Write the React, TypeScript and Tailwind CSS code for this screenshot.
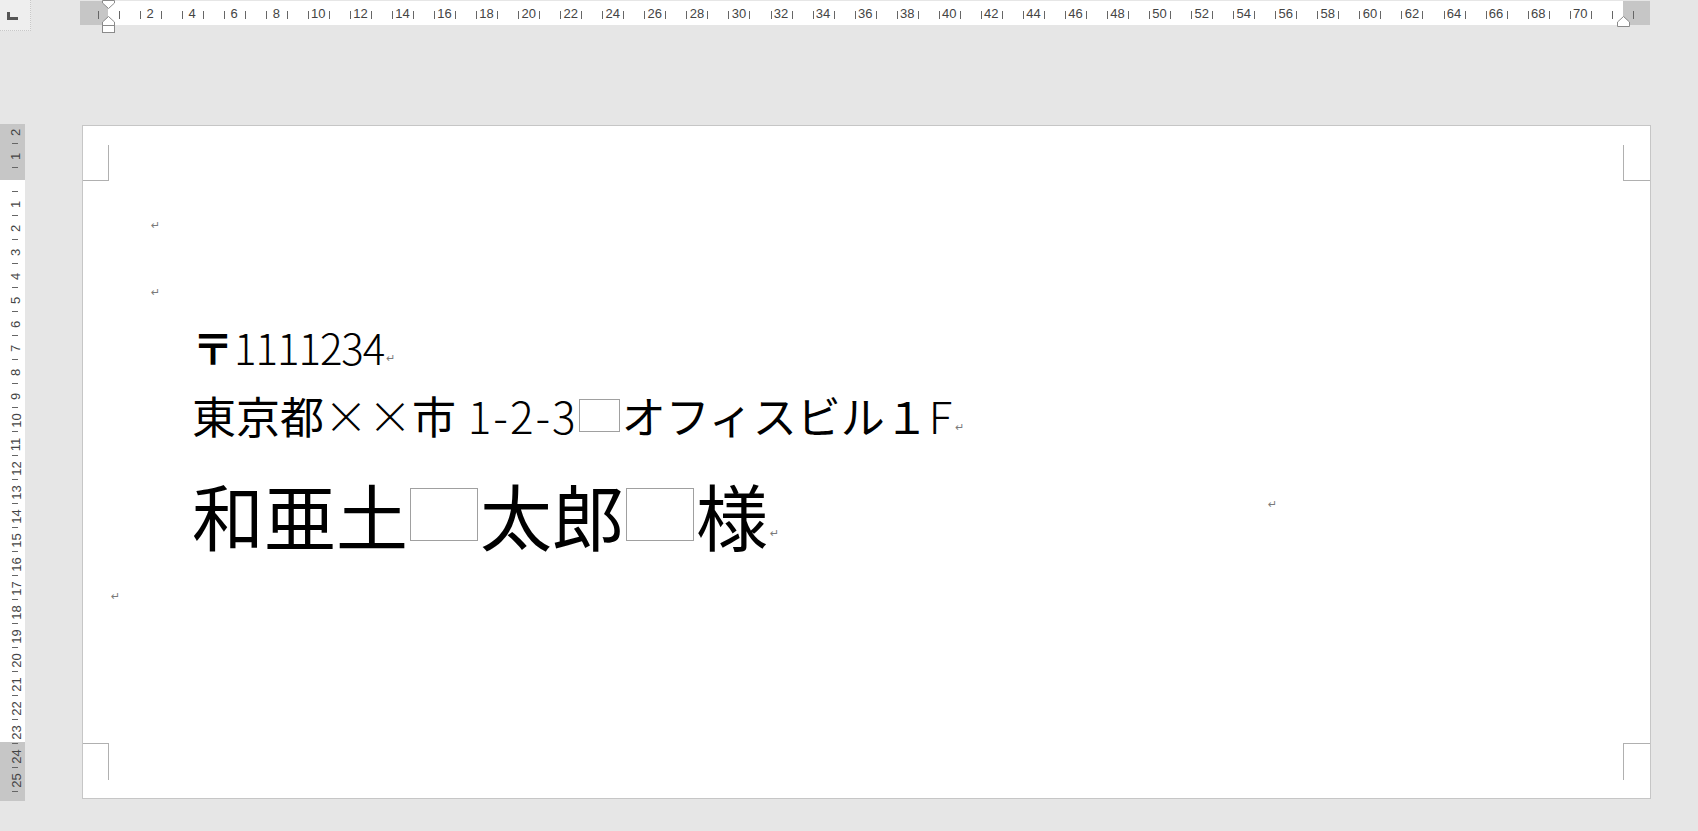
import React from 'react';

const hCells = Array.from({ length: 73 }, (_, i) => i);
const vCells = Array.from({ length: 28 }, (_, i) => i - 2);

const Return: React.FC<{ className?: string }> = ({ className = '' }) => (
  <span className={`font-['DejaVu_Sans',sans-serif] text-[11px] leading-none text-[#7a7a7a] ${className}`}>↵</span>
);

const FwBox: React.FC = () => (
  <span className="inline-block w-[0.94em] h-[0.74em] mx-[0.03em] mb-[0.05em] border border-[#a0a0a0] align-baseline" />
);

const TopRuler: React.FC = () => (
  <div className="relative ml-[49px] mt-px w-[1570px] h-[24px] bg-[linear-gradient(to_right,#c6c6c6_28px,#ffffff_28px,#ffffff_1543px,#c6c6c6_1543px)] font-['Liberation_Sans',sans-serif] text-[13px] text-[#444]">
    <div className="flex h-full pl-[17.5px]">
      {hCells.map(n => (
        <div key={n} className="relative w-[21.04px] h-full flex items-center justify-center">
          <span className="absolute left-0 top-[10px] h-[8px] w-px bg-[#666]" />
          {n > 0 && n < 72 && n % 2 === 0 ? <span className="leading-none">{n}</span> : null}
        </div>
      ))}
      <div className="relative w-px h-full">
        <span className="absolute left-0 top-[10px] h-[8px] w-px bg-[#666]" />
      </div>
    </div>
    {/* indent markers */}
    <svg className="absolute left-[21.5px] -top-px" width="13" height="34" viewBox="0 0 13 34">
      <polygon points="0.5,0.5 12.5,0.5 12.5,3 6.5,8.5 0.5,3" fill="#fff" stroke="#8a8a8a" />
      <polygon points="6.5,16.5 12.5,22 12.5,25.5 0.5,25.5 0.5,22" fill="#fff" stroke="#8a8a8a" />
      <rect x="0.5" y="25.5" width="12" height="7" fill="#fff" stroke="#8a8a8a" />
    </svg>
    <svg className="absolute left-[1536.5px] -top-px" width="13" height="28" viewBox="0 0 13 28">
      <polygon points="6.5,16.5 12.5,22 12.5,26.5 0.5,26.5 0.5,22" fill="#fff" stroke="#8a8a8a" />
    </svg>
  </div>
);

const SideRuler: React.FC = () => (
  <div className="w-[25px] h-[677px] overflow-hidden bg-[linear-gradient(to_bottom,#c6c6c6_56px,#ffffff_56px,#ffffff_618px,#c6c6c6_618px)] font-['Liberation_Sans',sans-serif] text-[13px] text-[#444]">
    <div className="flex flex-col -mt-[4px]">
      {vCells.map(n => (
        <div key={n} className="relative h-[24px] w-full flex items-center justify-center pl-[7px]">
          {n !== 0 ? <span className="inline-block -rotate-90 leading-none whitespace-nowrap">{Math.abs(n)}</span> : null}
          <span className="absolute left-[12px] bottom-0 w-[6px] h-px bg-[#666]" />
        </div>
      ))}
    </div>
  </div>
);

export default function App() {
  return (
    <div className="w-[1698px] h-[831px] overflow-hidden bg-[#e6e6e6]">
      <div className="flex items-start h-[124px]">
        <div className="w-[31px] h-[31px] bg-[#eeeeee] border-r border-b border-dotted border-[#c8c8c8] flex">
          <svg className="ml-[7px] mt-[12px]" width="11" height="8" viewBox="0 0 11 8">
            <path d="M0 0h3v5h8v3H0z" fill="#555" />
          </svg>
        </div>
        <TopRuler />
      </div>
      <div className="flex items-start">
        <SideRuler />
        <div className="relative ml-[57px] mt-px w-[1569px] h-[674px] bg-white border border-[#c6c6c6] font-['Noto_Sans_CJK_JP',sans-serif] text-black">
          {/* crop marks */}
          <div className="absolute left-0 top-[19px] w-[26px] h-[36px] border-r border-b border-[#b0b0b0]" />
          <div className="absolute left-[1540px] top-[19px] w-[27px] h-[36px] border-l border-b border-[#b0b0b0]" />
          <div className="absolute left-0 top-[617px] w-[26px] h-[37px] border-t border-r border-[#b0b0b0]" />
          <div className="absolute left-[1540px] top-[617px] w-[27px] h-[37px] border-t border-l border-[#b0b0b0]" />
          <Return className="absolute left-[1185px] top-[373px]" />

          <div className="mt-[94px] pl-[68px] h-[10px] leading-[10px] flex">
            <Return />
          </div>
          <div className="mt-[57px] pl-[68px] h-[10px] leading-[10px] flex">
            <Return />
          </div>
          <div className="mt-[29px] pl-[109px] text-[42px] leading-none whitespace-nowrap">
            <span className="font-bold">〒</span>
            <span className="font-light tracking-[-1px]">1111234</span>
            <Return className="relative -top-[3px] ml-[2px]" />
          </div>
          <div className="mt-[25px] pl-[109px] text-[44px] leading-none whitespace-nowrap">
            <span>東京都</span>
            <span className="inline-block w-[1em] text-center font-light">×</span>
            <span className="inline-block w-[1em] text-center font-light">×</span>
            <span>市</span>
            <span className="font-light tracking-[2px]"> 1-2-3</span>
            <FwBox />
            <span>オフィスビル１</span>
            <span className="font-light">F</span>
            <Return className="relative -top-[3px] ml-[3px]" />
          </div>
          <div className="mt-[41px] pl-[109px] text-[72px] leading-none whitespace-nowrap">
            <span>和亜土</span>
            <FwBox />
            <span>太郎</span>
            <FwBox />
            <span>様</span>
            <Return className="relative -top-[8px] ml-[2px]" />
          </div>
          <div className="mt-[41px] pl-[28px] h-[10px] leading-[10px] flex">
            <Return />
          </div>
        </div>
      </div>
    </div>
  );
}
